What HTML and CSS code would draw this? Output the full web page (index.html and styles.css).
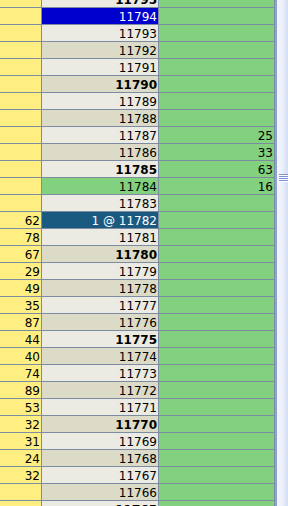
FILE: index.html
```html
<!DOCTYPE html>
<html>
<head>
<meta charset="utf-8">
<link rel="stylesheet" href="styles.css">
</head>
<body>
<div class="ladder">
  <div class="grid">
    <div class="c vol"></div><div class="c px light b">11795</div><div class="c bid"></div>
    <div class="c vol"></div><div class="c px sel">11794</div><div class="c bid"></div>
    <div class="c vol"></div><div class="c px light">11793</div><div class="c bid"></div>
    <div class="c vol"></div><div class="c px dark">11792</div><div class="c bid"></div>
    <div class="c vol"></div><div class="c px light">11791</div><div class="c bid"></div>
    <div class="c vol"></div><div class="c px dark b">11790</div><div class="c bid"></div>
    <div class="c vol"></div><div class="c px light">11789</div><div class="c bid"></div>
    <div class="c vol"></div><div class="c px dark">11788</div><div class="c bid"></div>
    <div class="c vol"></div><div class="c px light">11787</div><div class="c bid">25</div>
    <div class="c vol"></div><div class="c px dark">11786</div><div class="c bid">33</div>
    <div class="c vol"></div><div class="c px light b">11785</div><div class="c bid">63</div>
    <div class="c vol"></div><div class="c px last">11784</div><div class="c bid">16</div>
    <div class="c vol"></div><div class="c px light">11783</div><div class="c bid"></div>
    <div class="c vol">62</div><div class="c px fill">1 @ 11782</div><div class="c bid"></div>
    <div class="c vol">78</div><div class="c px light">11781</div><div class="c bid"></div>
    <div class="c vol">67</div><div class="c px dark b">11780</div><div class="c bid"></div>
    <div class="c vol">29</div><div class="c px light">11779</div><div class="c bid"></div>
    <div class="c vol">49</div><div class="c px dark">11778</div><div class="c bid"></div>
    <div class="c vol">35</div><div class="c px light">11777</div><div class="c bid"></div>
    <div class="c vol">87</div><div class="c px dark">11776</div><div class="c bid"></div>
    <div class="c vol">44</div><div class="c px light b">11775</div><div class="c bid"></div>
    <div class="c vol">40</div><div class="c px dark">11774</div><div class="c bid"></div>
    <div class="c vol">74</div><div class="c px light">11773</div><div class="c bid"></div>
    <div class="c vol">89</div><div class="c px dark">11772</div><div class="c bid"></div>
    <div class="c vol">53</div><div class="c px light">11771</div><div class="c bid"></div>
    <div class="c vol">32</div><div class="c px dark b">11770</div><div class="c bid"></div>
    <div class="c vol">31</div><div class="c px light">11769</div><div class="c bid"></div>
    <div class="c vol">24</div><div class="c px dark">11768</div><div class="c bid"></div>
    <div class="c vol">32</div><div class="c px light">11767</div><div class="c bid"></div>
    <div class="c vol"></div><div class="c px dark">11766</div><div class="c bid"></div>
    <div class="c vol"></div><div class="c px light b">11765</div><div class="c bid"></div>
  </div>
  <div class="scrollbar">
    <div class="grip"><span></span><span></span><span></span><span></span></div>
  </div>
</div>
</body>
</html>
```

FILE: styles.css
```css
html, body {
  margin: 0;
  padding: 0;
  background: #ffffff;
}
body {
  width: 288px;
  height: 506px;
  overflow: hidden;
  font-family: "DejaVu Sans", Verdana, sans-serif;
  font-size: 12px;
}
.ladder {
  display: flex;
  height: 506px;
  overflow: hidden;
}
.grid {
  display: grid;
  grid-template-columns: 41px 116px 115px;
  grid-auto-rows: 16px;
  gap: 1px;
  background: #7e8ca2;
  border-right: 1px solid #7e8ca2;
  margin-top: -9px;
  align-content: start;
  flex: none;
  height: 527px;
}
.c {
  height: 16px;
  line-height: 18px;
  text-align: right;
  padding-right: 1px;
  color: #000000;
  white-space: nowrap;
  overflow: hidden;
}
.vol { background: #ffef82; }
.bid { background: #81d17e; }
.light { background: #ebebe3; }
.dark { background: #dbdbc8; }
.b { font-weight: bold; }
.sel { background: #0000cc; color: #ffffff; }
.fill { background: #1a5a80; color: #ffffff; }
.last { background: #81d17e; }
.scrollbar {
  flex: none;
  width: 11px;
  height: 506px;
  border-left: 2px solid #8aa3e0;
  background: linear-gradient(to right, #f3f6fd 0%, #eef2fc 40%, #d4ddf5 100%);
  display: flex;
  flex-direction: column;
  align-items: flex-end;
  padding-top: 174px;
  box-sizing: content-box;
}
.grip {
  display: flex;
  flex-direction: column;
  width: 9px;
  margin-right: 0;
}
.grip span {
  display: block;
  height: 1px;
  background: #7d95d8;
  border-bottom: 1px solid #ffffff;
}
```
